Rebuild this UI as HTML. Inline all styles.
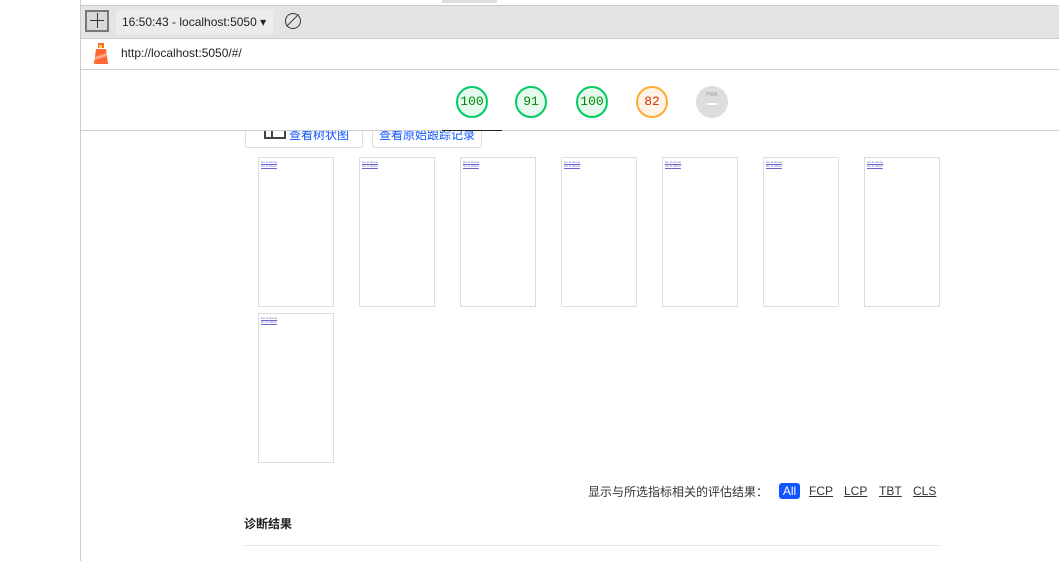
<!DOCTYPE html><html><head><meta charset="utf-8"><style>
body{margin:0;width:1059px;height:561px;position:relative;overflow:hidden;background:#fff;font-family:"Liberation Sans","Noto Sans CJK SC",sans-serif}
.a{position:absolute}
.th{position:absolute;width:74px;height:148px;border:1px solid #ddd;background:#fff}
.th div{font-size:3px;color:#66c;line-height:3.5px;margin:3px 0 0 2px;text-decoration:underline}
.g{position:absolute;top:86px;width:28px;height:28px;border-radius:50%;border:2px solid #0c6;background:#e6f9ee;color:#080;font:13px "Liberation Mono",monospace;text-align:center;line-height:28px}
.f{position:absolute;top:484px;font-size:12px;color:#333;text-decoration:underline}
</style></head><body>
<div class="a" style="left:80px;top:0;width:1px;height:561px;background:#ccc"></div>
<div class="a" style="left:442px;top:0;width:55px;height:3px;background:#ddd"></div>
<div class="a" style="left:81px;top:5px;width:978px;height:32px;background:#e4e4e4;border-top:1px solid #ccc;border-bottom:1px solid #ccc"></div>
<div class="a" style="left:85px;top:10px;width:24px;height:22px;border:2px solid #777;box-sizing:border-box;background:#d8d8d8"></div>
<div class="a" style="left:90px;top:20px;width:14px;height:1px;background:#333"></div>
<div class="a" style="left:97px;top:13px;width:1px;height:15px;background:#333"></div>
<div class="a" style="left:116px;top:10px;width:157px;height:24px;background:#ececec;font-size:12px;line-height:24px;color:#222;padding-left:6px;box-sizing:border-box">16:50:43 - localhost:5050 ▾</div>
<div class="a" style="left:285px;top:13px;width:14px;height:14px;border:1.2px solid #333;border-radius:50%"></div>
<div class="a" style="left:292px;top:12px;width:1.2px;height:17px;background:#333;transform:rotate(45deg)"></div>
<svg class="a" style="left:92px;top:41px" width="18" height="25"><rect x="6" y="2" width="6" height="5" fill="#f63"/><rect x="7" y="4" width="3" height="3" fill="#fd3"/><polygon points="4,8 14,8 16,23 2,23" fill="#f63"/><polygon points="3,16 15,12 15,15 3,19" fill="#fa8"/></svg>
<div class="a" style="left:121px;top:46px;font-size:12px;color:#222">http://localhost:5050/#/</div>
<div class="a" style="left:81px;top:69px;width:978px;height:1px;background:#ccc"></div>
<div class="g" style="left:456px">100</div>
<div class="g" style="left:515px">91</div>
<div class="g" style="left:576px">100</div>
<div class="g" style="left:636px;border-color:#fa3;background:#fff3e6;color:#c30">82</div>
<div class="a" style="left:696px;top:86px;width:32px;height:32px;border-radius:50%;background:#ddd"><div style="font-size:5px;color:#999;text-align:center;margin-top:6px">PWA</div><div style="width:10px;height:2px;background:#fff;margin:5px auto"></div></div>
<div class="a" style="left:245px;top:131px;width:116px;height:16px;border:1px solid #ddd;border-top:none;border-radius:0 0 3px 3px"></div>
<div class="a" style="left:264px;top:131px;width:18px;height:6px;border:2px solid #444;border-top:none"></div>
<div class="a" style="left:271px;top:131px;width:2px;height:7px;background:#444"></div>
<div class="a" style="left:289px;top:126px;font-size:12px;color:#15f">查看树状图</div>
<div class="a" style="left:372px;top:131px;width:108px;height:16px;border:1px solid #ddd;border-top:none;border-radius:0 0 3px 3px"></div>
<div class="a" style="left:379px;top:126px;font-size:12px;color:#15f">查看原始跟踪记录</div>
<div class="a" style="left:81px;top:120px;width:978px;height:10px;background:#fff"></div>
<div class="a" style="left:81px;top:130px;width:978px;height:1px;background:#ccc"></div>
<div class="a" style="left:442px;top:130px;width:60px;height:1px;background:#222"></div>
<div class="th" style="left:258px;top:157px"><div>Go to Home<br>Go to About</div></div>
<div class="th" style="left:359px;top:157px"><div>Go to Home<br>Go to About</div></div>
<div class="th" style="left:460px;top:157px"><div>Go to Home<br>Go to About</div></div>
<div class="th" style="left:561px;top:157px"><div>Go to Home<br>Go to About</div></div>
<div class="th" style="left:662px;top:157px"><div>Go to Home<br>Go to About</div></div>
<div class="th" style="left:763px;top:157px"><div>Go to Home<br>Go to About</div></div>
<div class="th" style="left:864px;top:157px"><div>Go to Home<br>Go to About</div></div>
<div class="th" style="left:258px;top:313px"><div>Go to Home<br>Go to About</div></div>
<div class="a" style="left:588px;top:483px;font-size:12px;color:#333">显示与所选指标相关的评估结果：</div>
<div class="a" style="left:779px;top:483px;width:21px;height:16px;background:#15f;border-radius:3px;color:#fff;font-size:12px;text-align:center;line-height:16px">All</div>
<div class="f" style="left:809px">FCP</div>
<div class="f" style="left:844px">LCP</div>
<div class="f" style="left:879px">TBT</div>
<div class="f" style="left:913px">CLS</div>
<div class="a" style="left:244px;top:515px;font-size:12px;color:#222;font-weight:bold">诊断结果</div>
<div class="a" style="left:244px;top:545px;width:696px;height:1px;background:#e4e4e4"></div>
</body></html>
